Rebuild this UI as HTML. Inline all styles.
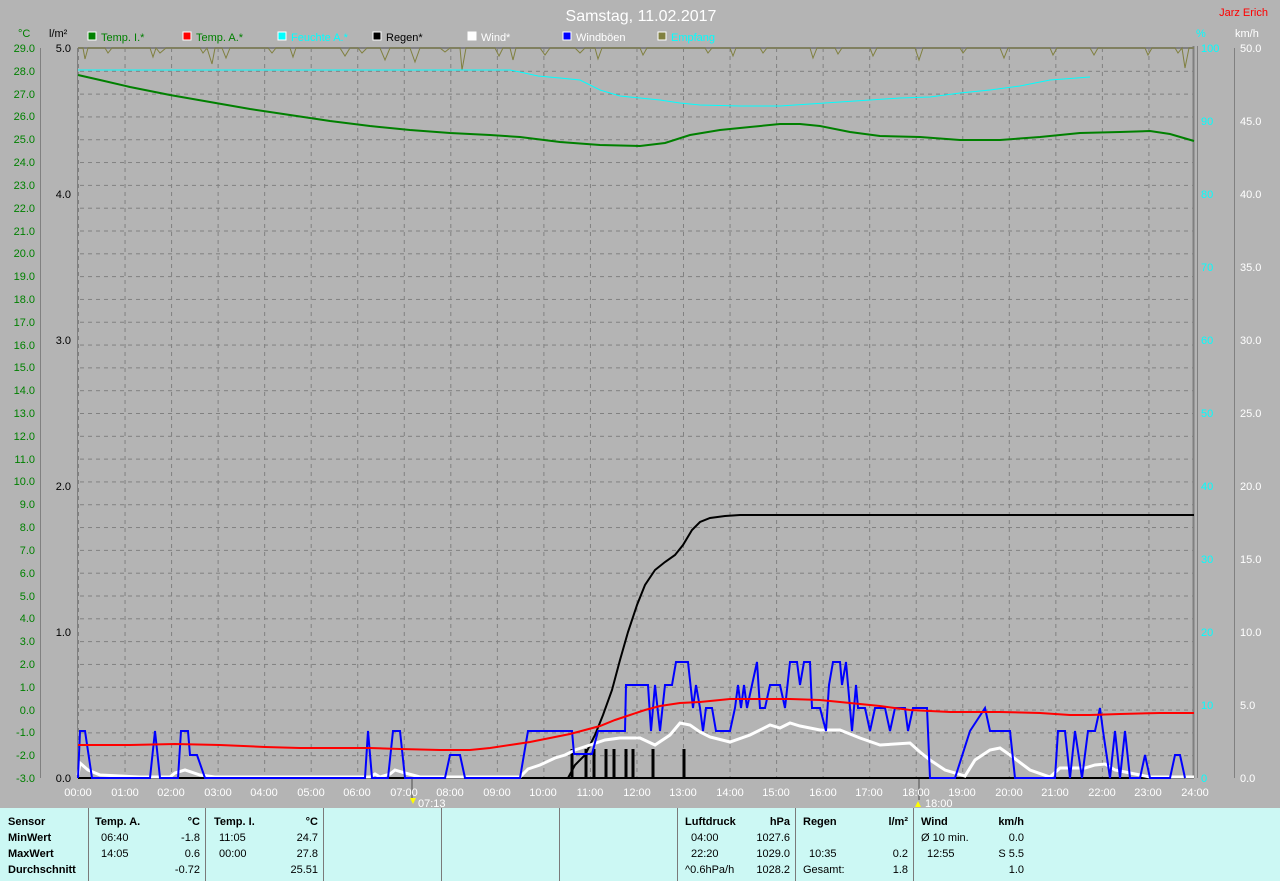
<!DOCTYPE html>
<html><head><meta charset="utf-8"><style>
body{margin:0;background:#b4b4b4;width:1280px;height:881px;overflow:hidden;font-family:"Liberation Sans",sans-serif}
svg{position:absolute;left:0;top:0}
text{font-family:"Liberation Sans",sans-serif;font-size:11px}
.tb{position:absolute;left:0;top:808px;width:1280px;height:73px;background:#ccf8f4;font-size:11px;color:#000}
.c{position:absolute;top:0;height:73px;border-left:1px solid #7a7a7a}
.c div{position:absolute;white-space:nowrap}
b{font-weight:bold}
</style></head><body>
<svg width="1280" height="808" viewBox="0 0 1280 808">
<defs>
<pattern id="hg" x="0" y="48" width="1280" height="22.8125" patternUnits="userSpaceOnUse"><line x1="0" y1="0.5" x2="1280" y2="0.5" stroke="#808080" stroke-dasharray="4,4"/></pattern>
<pattern id="vg" x="78" y="0" width="46.54" height="808" patternUnits="userSpaceOnUse"><line x1="0.5" y1="0" x2="0.5" y2="808" stroke="#808080" stroke-dasharray="4,4"/></pattern>
</defs>
<rect x="78" y="48" width="1116" height="730" fill="url(#hg)"/>
<rect x="78" y="48" width="1116" height="730" fill="url(#vg)"/>
<text x="641" y="21" fill="#fff" font-size="16" text-anchor="middle" style="font-size:16px">Samstag, 11.02.2017</text>
<text x="1268" y="16" fill="#f00" text-anchor="end">Jarz Erich</text>
<text x="18" y="37" fill="#008000">°C</text><text x="49" y="37" fill="#000">l/m²</text>
<text x="1196" y="37" fill="#0ff">%</text><text x="1235" y="37" fill="#fff">km/h</text>
<g>
<rect x="88" y="32" width="8" height="8" fill="#008000" stroke="#fff"/><text x="101" y="41" fill="#008000">Temp. I.*</text>
<rect x="183" y="32" width="8" height="8" fill="#f00" stroke="#fff"/><text x="196" y="41" fill="#008000">Temp. A.*</text>
<rect x="278" y="32" width="8" height="8" fill="#0ff" stroke="#fff"/><text x="291" y="41" fill="#0ff">Feuchte A.*</text>
<rect x="373" y="32" width="8" height="8" fill="#000" stroke="#fff"/><text x="386" y="41" fill="#000">Regen*</text>
<rect x="468" y="32" width="8" height="8" fill="#fff" stroke="#fff"/><text x="481" y="41" fill="#fff">Wind*</text>
<rect x="563" y="32" width="8" height="8" fill="#00f" stroke="#fff"/><text x="576" y="41" fill="#fff">Windböen</text>
<rect x="658" y="32" width="8" height="8" fill="#808040" stroke="#fff"/><text x="671" y="41" fill="#0ff">Empfang</text>
</g>
<!-- axes -->
<line x1="40.5" y1="48" x2="40.5" y2="778" stroke="#808080"/>
<line x1="77.5" y1="48" x2="77.5" y2="778" stroke="#808080"/>
<line x1="1193.5" y1="46" x2="1193.5" y2="778" stroke="#808080" stroke-width="2"/>
<line x1="1197.5" y1="46" x2="1197.5" y2="778" stroke="#808080"/>
<line x1="1234.5" y1="48" x2="1234.5" y2="778" stroke="#808080"/>
<line x1="78" y1="48" x2="1194" y2="48" stroke="#808080" stroke-width="2"/>
<line x1="412" y1="778" x2="412" y2="800" stroke="#808080" stroke-width="2"/>
<line x1="919" y1="778" x2="919" y2="800" stroke="#808080" stroke-width="2"/>
<g fill="#008000" text-anchor="end">
<text x="35" y="52">29.0</text><text x="35" y="75">28.0</text><text x="35" y="98">27.0</text><text x="35" y="120">26.0</text><text x="35" y="143">25.0</text><text x="35" y="166">24.0</text><text x="35" y="189">23.0</text><text x="35" y="212">22.0</text><text x="35" y="235">21.0</text><text x="35" y="257">20.0</text><text x="35" y="280">19.0</text><text x="35" y="303">18.0</text><text x="35" y="326">17.0</text><text x="35" y="349">16.0</text><text x="35" y="371">15.0</text><text x="35" y="394">14.0</text><text x="35" y="417">13.0</text><text x="35" y="440">12.0</text><text x="35" y="463">11.0</text><text x="35" y="485">10.0</text><text x="35" y="508">9.0</text><text x="35" y="531">8.0</text><text x="35" y="554">7.0</text><text x="35" y="577">6.0</text><text x="35" y="600">5.0</text><text x="35" y="622">4.0</text><text x="35" y="645">3.0</text><text x="35" y="668">2.0</text><text x="35" y="691">1.0</text><text x="35" y="714">0.0</text><text x="35" y="736">-1.0</text><text x="35" y="759">-2.0</text><text x="35" y="782">-3.0</text>
</g>
<g fill="#000" text-anchor="end"><text x="71" y="52">5.0</text><text x="71" y="198">4.0</text><text x="71" y="344">3.0</text><text x="71" y="490">2.0</text><text x="71" y="636">1.0</text><text x="71" y="782">0.0</text></g>
<g fill="#0ff"><text x="1201" y="52">100</text><text x="1201" y="125">90</text><text x="1201" y="198">80</text><text x="1201" y="271">70</text><text x="1201" y="344">60</text><text x="1201" y="417">50</text><text x="1201" y="490">40</text><text x="1201" y="563">30</text><text x="1201" y="636">20</text><text x="1201" y="709">10</text><text x="1201" y="782">0</text></g>
<g fill="#fff"><text x="1240" y="52">50.0</text><text x="1240" y="125">45.0</text><text x="1240" y="198">40.0</text><text x="1240" y="271">35.0</text><text x="1240" y="344">30.0</text><text x="1240" y="417">25.0</text><text x="1240" y="490">20.0</text><text x="1240" y="563">15.0</text><text x="1240" y="636">10.0</text><text x="1240" y="709">5.0</text><text x="1240" y="782">0.0</text></g>
<g fill="#fff" text-anchor="middle">
<text x="78" y="796">00:00</text><text x="125" y="796">01:00</text><text x="171" y="796">02:00</text><text x="218" y="796">03:00</text><text x="264" y="796">04:00</text><text x="311" y="796">05:00</text><text x="357" y="796">06:00</text><text x="404" y="796">07:00</text><text x="450" y="796">08:00</text><text x="497" y="796">09:00</text><text x="543" y="796">10:00</text><text x="590" y="796">11:00</text><text x="637" y="796">12:00</text><text x="683" y="796">13:00</text><text x="730" y="796">14:00</text><text x="776" y="796">15:00</text><text x="823" y="796">16:00</text><text x="869" y="796">17:00</text><text x="916" y="796">18:00</text><text x="962" y="796">19:00</text><text x="1009" y="796">20:00</text><text x="1055" y="796">21:00</text><text x="1102" y="796">22:00</text><text x="1148" y="796">23:00</text><text x="1195" y="796">24:00</text>
</g>
<text x="418" y="807" fill="#fff">07:13</text><text x="925" y="807" fill="#fff">18:00</text>
<path d="M410 798 l3 6 l3 -6z" fill="#ff0"/><path d="M915 807 l3 -6 l3 6z" fill="#ff0"/>
<!-- empfang -->
<polyline fill="none" stroke="#808040" points="78,48 83,48 85,59 88,48 105,48 108,53 112,48 150,48 153,57 156,48 160,53 166,48 200,48 203,53 207,48 212,64 215,48 222,48 226,58 230,48 268,48 272,53 276,48 290,48 293,57 296,48 340,48 345,56 350,48 358,48 362,53 367,48 380,48 385,60 390,48 410,48 415,62 420,48 440,48 445,52 450,48 460,48 462,70 466,48 495,48 499,56 503,48 510,48 513,60 516,48 540,48 545,55 550,48 575,48 580,53 585,48 595,48 598,59 602,48 640,48 643,55 647,48 705,48 708,53 712,48 730,48 733,56 736,48 760,48 763,53 767,48 810,48 813,58 817,48 835,48 838,54 842,48 870,48 873,56 877,48 915,48 919,60 923,48 960,48 963,53 967,48 1000,48 1004,58 1008,48 1050,48 1053,55 1057,48 1090,48 1094,55 1098,48 1145,48 1148,55 1152,48 1175,48 1178,53 1182,48 1185,68 1189,48 1194,48"/>
<!-- feuchte -->
<polyline fill="none" stroke="#0ff" points="78,70 510,70 520,72 538,76 560,78 580,80 600,90 620,96 640,98 660,100 680,103 700,105 740,106 780,106 810,104 840,102 870,100 900,98 930,97 960,93 990,90 1020,86 1050,80 1090,77"/>
<!-- temp I -->
<polyline fill="none" stroke="#008000" stroke-width="2" points="78,75 100,80 130,87 170,95 210,102 250,109 290,115 330,121 370,126 410,130 450,133 490,135 520,137 560,142 600,145 640,146 665,143 690,135 720,130 750,127 780,124 800,124 820,126 850,132 880,136 920,137 960,140 1000,140 1040,137 1080,133 1120,132 1150,131 1170,134 1194,141"/>
<!-- rain -->
<polyline fill="none" stroke="#000" stroke-width="2" points="568,778 575,765 585,755 595,735 603,715 612,690 620,660 628,632 637,605 645,585 655,570 665,562 675,555 683,545 692,530 700,522 710,518 725,516 740,515 1194,515"/>
<g stroke="#000" stroke-width="3"><line x1="572" y1="778" x2="572" y2="749"/><line x1="586" y1="778" x2="586" y2="749"/><line x1="594" y1="778" x2="594" y2="749"/><line x1="606" y1="778" x2="606" y2="749"/><line x1="614" y1="778" x2="614" y2="749"/><line x1="626" y1="778" x2="626" y2="749"/><line x1="633" y1="778" x2="633" y2="749"/><line x1="653" y1="778" x2="653" y2="749"/><line x1="684" y1="778" x2="684" y2="749"/></g>
<line x1="78" y1="778" x2="1194" y2="778" stroke="#000" stroke-width="2"/>
<!-- wind white -->
<polyline fill="none" stroke="#fff" stroke-width="3" points="78,775 80,763 88,770 100,775 140,777 170,777 175,773 185,770 200,775 215,777 240,777 370,777 375,774 380,777 390,774 395,770 405,773 420,777 460,777 520,777 528,769 540,765 555,758 565,755 575,750 590,745 605,740 620,738 640,738 655,745 670,735 680,723 690,725 700,732 710,737 730,742 750,735 770,725 780,728 790,723 800,726 820,730 840,730 860,738 880,745 910,743 920,752 930,760 945,770 965,776 975,760 990,750 1000,748 1010,755 1030,770 1050,777 1060,768 1070,768 1085,768 1095,765 1105,764 1115,770 1130,773 1150,777 1194,777"/>
<!-- gusts blue -->
<polyline fill="none" stroke="#00f" stroke-width="2" points="78,778 80,731 85,731 92,778 150,778 155,731 160,778 178,778 181,731 188,731 190,755 197,755 205,778 365,778 368,731 372,778 388,778 393,731 400,731 405,778 445,778 450,755 460,755 465,778 520,778 528,731 572,731 574,754 592,754 598,731 625,731 626,685 648,685 651,731 655,685 660,731 665,685 672,685 676,662 688,662 693,708 696,685 700,708 703,731 706,708 712,708 716,731 730,731 735,708 738,685 741,708 744,685 747,708 752,685 757,662 760,708 765,708 770,685 780,685 785,708 790,662 797,662 800,685 804,662 810,662 812,708 820,708 826,731 829,685 833,662 840,662 842,685 846,662 852,731 856,685 858,708 865,708 870,731 875,708 885,708 890,731 895,708 900,708 905,708 908,731 913,708 915,708 927,708 930,778 955,778 970,731 985,708 990,731 1010,731 1015,778 1055,778 1058,731 1065,731 1070,778 1075,731 1082,778 1088,731 1095,731 1100,708 1103,731 1110,778 1115,731 1120,778 1125,731 1130,778 1140,778 1145,755 1150,778 1170,778 1175,755 1180,755 1185,778"/>
<!-- temp A red -->
<polyline fill="none" stroke="#f00" stroke-width="2" points="78,745 130,745 175,744 220,745 265,747 300,748 340,748 370,748 400,749 440,750 470,750 490,748 510,745 530,742 550,738 570,734 585,730 600,726 615,720 630,715 645,710 660,706 680,703 700,702 730,699 760,699 790,699 820,700 850,703 880,706 910,710 950,712 1000,712 1040,713 1070,715 1090,715 1120,714 1160,713 1194,713"/>
</svg>
<div class="tb">
<div class="c" style="left:0;border:none;width:88px"><div style="left:8px;top:8px"><b>Sensor</b></div><div style="left:8px;top:24px"><b>MinWert</b></div><div style="left:8px;top:40px"><b>MaxWert</b></div><div style="left:8px;top:56px"><b>Durchschnitt</b></div></div>
<div class="c" style="left:88px;width:117px"><div style="left:6px;top:8px"><b>Temp. A.</b></div><div style="right:6px;top:8px"><b>°C</b></div><div style="left:12px;top:24px">06:40</div><div style="right:6px;top:24px">-1.8</div><div style="left:12px;top:40px">14:05</div><div style="right:6px;top:40px">0.6</div><div style="right:6px;top:56px">-0.72</div></div>
<div class="c" style="left:205px;width:118px"><div style="left:8px;top:8px"><b>Temp. I.</b></div><div style="right:6px;top:8px"><b>°C</b></div><div style="left:13px;top:24px">11:05</div><div style="right:6px;top:24px">24.7</div><div style="left:13px;top:40px">00:00</div><div style="right:6px;top:40px">27.8</div><div style="right:6px;top:56px">25.51</div></div>
<div class="c" style="left:323px;width:118px"></div>
<div class="c" style="left:441px;width:118px"></div>
<div class="c" style="left:559px;width:118px"></div>
<div class="c" style="left:677px;width:118px"><div style="left:7px;top:8px"><b>Luftdruck</b></div><div style="right:6px;top:8px"><b>hPa</b></div><div style="left:13px;top:24px">04:00</div><div style="right:6px;top:24px">1027.6</div><div style="left:13px;top:40px">22:20</div><div style="right:6px;top:40px">1029.0</div><div style="left:7px;top:56px">^0.6hPa/h</div><div style="right:6px;top:56px">1028.2</div></div>
<div class="c" style="left:795px;width:118px"><div style="left:7px;top:8px"><b>Regen</b></div><div style="right:6px;top:8px"><b>l/m²</b></div><div style="left:13px;top:40px">10:35</div><div style="right:6px;top:40px">0.2</div><div style="left:7px;top:56px">Gesamt:</div><div style="right:6px;top:56px">1.8</div></div>
<div class="c" style="left:913px;width:118px"><div style="left:7px;top:8px"><b>Wind</b></div><div style="right:8px;top:8px"><b>km/h</b></div><div style="left:7px;top:24px">Ø 10 min.</div><div style="right:8px;top:24px">0.0</div><div style="left:13px;top:40px">12:55</div><div style="right:8px;top:40px">S 5.5</div><div style="right:8px;top:56px">1.0</div></div>
</div>
</body></html>
